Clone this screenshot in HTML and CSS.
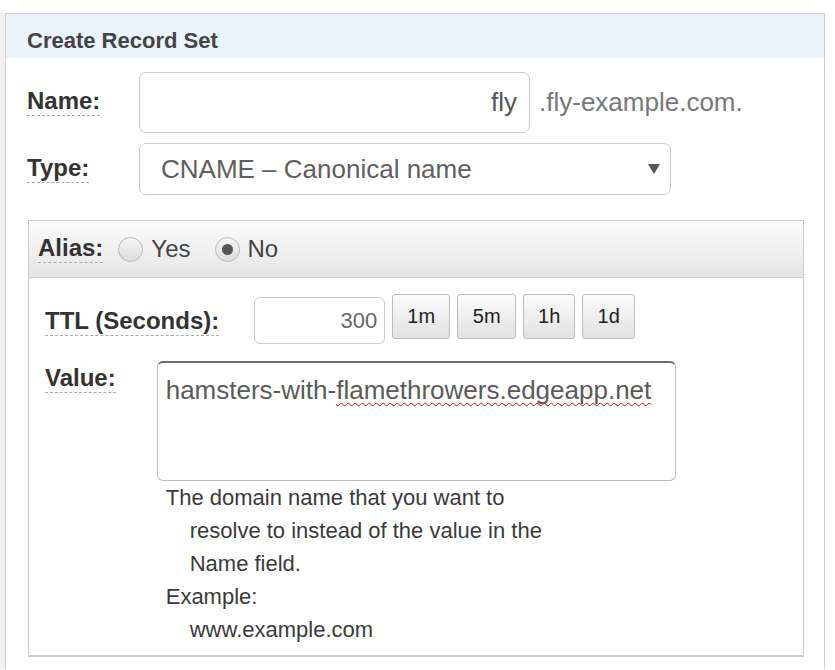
FILE: index.html
```html
<!DOCTYPE html>
<html lang="en">
<head>
<meta charset="utf-8">
<title>Create Record Set</title>
<link rel="stylesheet" href="styles.css">
</head>
<body>
<div class="panel">
  <div class="panel-head">Create Record Set</div>
  <div class="panel-body">
    <div class="row row-name">
      <span class="lbl">Name:</span>
      <div class="input name-input">fly</div>
      <span class="suffix">.fly-example.com.</span>
    </div>
    <div class="row row-type">
      <span class="lbl">Type:</span>
      <div class="select">
        <span>CNAME – Canonical name</span>
        <span class="arrow"></span>
      </div>
    </div>
    <div class="box">
      <div class="box-head">
        <span class="lbl">Alias:</span>
        <span class="radio"></span><span class="radio-text">Yes</span>
        <span class="radio checked"></span><span class="radio-text">No</span>
      </div>
      <div class="box-body">
        <div class="ttl-row">
          <span class="lbl">TTL (Seconds):</span>
          <div class="input ttl-input">300</div>
          <div class="btns">
            <span class="btn b1m">1m</span>
            <span class="btn b5m">5m</span>
            <span class="btn b1h">1h</span>
            <span class="btn b1d">1d</span>
          </div>
        </div>
        <div class="value-row">
          <span class="lbl">Value:</span>
          <div class="value-col">
            <div class="textarea">hamsters-with-<span class="spell">flamethrowers.edgeapp.net</span></div>
            <div class="help">
              <p class="hang">The domain name that you want to resolve to instead of the value in the Name field.</p>
              <p class="hang">Example:<br>www.example.com</p>
            </div>
          </div>
        </div>
      </div>
    </div>
  </div>
</div>
</body>
</html>
```

FILE: styles.css
```css
* { box-sizing: border-box; }
html, body { margin: 0; padding: 0; background: #fff; }
body {
  font-family: "Liberation Sans", Arial, sans-serif;
  color: #333;
}
.panel {
  margin: 13px 0 0 5px;
  width: 820px;
  border: 1px solid #cfcfcf;
  border-bottom: 0;
  padding-bottom: 12px;
  box-shadow: -5px 0 0 #f1f1f1;
}
.panel-head {
  height: 44px;
  background: #ebf3fd;
  padding: 9px 0 0 21px;
  font-size: 22px;
  font-weight: bold;
  color: #444;
  line-height: 36px;
}
.panel-body {
  padding: 14px 20px 0 21px;
}
.lbl {
  font-weight: bold;
  font-size: 24px;
  color: #333;
  border-bottom: 1px dashed #aaa;
  line-height: 24px;
  padding-bottom: 2px;
}
.row {
  display: flex;
  align-items: center;
}
.row-name .lbl { width: 73px; margin-right: 39px; }
.row-type .lbl { width: 62px; margin-right: 50px; }
.row-type { margin-top: 10px; }
.input {
  border: 1px solid #ccc;
  border-radius: 7px;
  background: #fff;
  color: #555;
  font-size: 26px;
  display: flex;
  align-items: center;
  justify-content: flex-end;
}
.name-input {
  width: 391px;
  height: 61px;
  padding-right: 12px;
}
.suffix {
  margin-left: 9px;
  font-size: 26px;
  color: #777;
}
.select {
  width: 532px;
  height: 52px;
  border: 1px solid #ccc;
  border-radius: 7px;
  display: flex;
  align-items: center;
  justify-content: space-between;
  padding: 0 10px 0 21px;
  font-size: 26px;
  color: #5f5f5f;
}
.select .arrow {
  width: 0;
  height: 0;
  border-left: 6px solid transparent;
  border-right: 6px solid transparent;
  border-top: 10px solid #555;
}
.box {
  margin-top: 25px;
  margin-left: 1px;
  width: 776px;
  border: 1px solid #cccccc;
  border-bottom: 2px solid #d0d0d0;
  padding-bottom: 9px;
}
.box-head {
  height: 57px;
  background: linear-gradient(#fbfbfb, #e6e6e6);
  border-bottom: 1px solid #cdcdcd;
  display: flex;
  align-items: center;
  padding-left: 9px;
}
.box-head .lbl { margin-right: 15px; }
.radio {
  width: 25px;
  height: 25px;
  border-radius: 50%;
  border: 1px solid #b9b9b9;
  background: linear-gradient(#f6f6f6, #dcdcdc);
  display: inline-flex;
  align-items: center;
  justify-content: center;
}
.radio.checked::after {
  content: "";
  width: 11px;
  height: 11px;
  border-radius: 50%;
  background: #555;
}
.radio-text {
  font-size: 24px;
  color: #444;
  margin-left: 8px;
  margin-right: 24px;
}
.box-body {
  padding: 16px 0 0 16px;
}
.ttl-row {
  display: flex;
  align-items: flex-start;
}
.ttl-row .lbl {
  margin-top: 15px;
  margin-right: 35px;
}
.ttl-input {
  margin-top: 3px;
  width: 131px;
  height: 47px;
  padding-right: 7px;
  font-size: 22px;
  color: #666;
  border-radius: 6px;
}
.btns {
  display: flex;
  gap: 7px;
  margin-left: 7px;
}
.btn {
  height: 45px;
  border: 1px solid #bdbdbd;
  border-radius: 3px;
  background: linear-gradient(#fbfbfb, #e2e2e2);
  font-size: 20px;
  color: #222;
  display: flex;
  align-items: center;
  justify-content: center;
}
.b1m { width: 58px; }
.b5m { width: 59px; }
.b1h { width: 52px; }
.b1d { width: 53px; }
.value-row {
  display: flex;
  align-items: flex-start;
  margin-top: 17px;
}
.value-row .lbl {
  margin-top: 5px;
  margin-right: 41px;
}
.textarea {
  width: 519px;
  height: 120px;
  border: 1px solid #bdbdbd;
  border-top: 2px solid #6c6c6c;
  border-radius: 6px;
  padding: 12px 8px;
  font-size: 26px;
  color: #5a5a5a;
  line-height: 30px;
}
.spell {
  text-decoration: underline wavy #e01010;
  text-decoration-thickness: 1.2px;
  text-decoration-skip-ink: none;
  text-underline-offset: 3px;
}
.help {
  padding: 0 0 0 9px;
  font-size: 22px;
  line-height: 33px;
  color: #3a3a3a;
}
.hang {
  margin: 0;
  padding-left: 24px;
  text-indent: -24px;
  width: 395px;
}
```
